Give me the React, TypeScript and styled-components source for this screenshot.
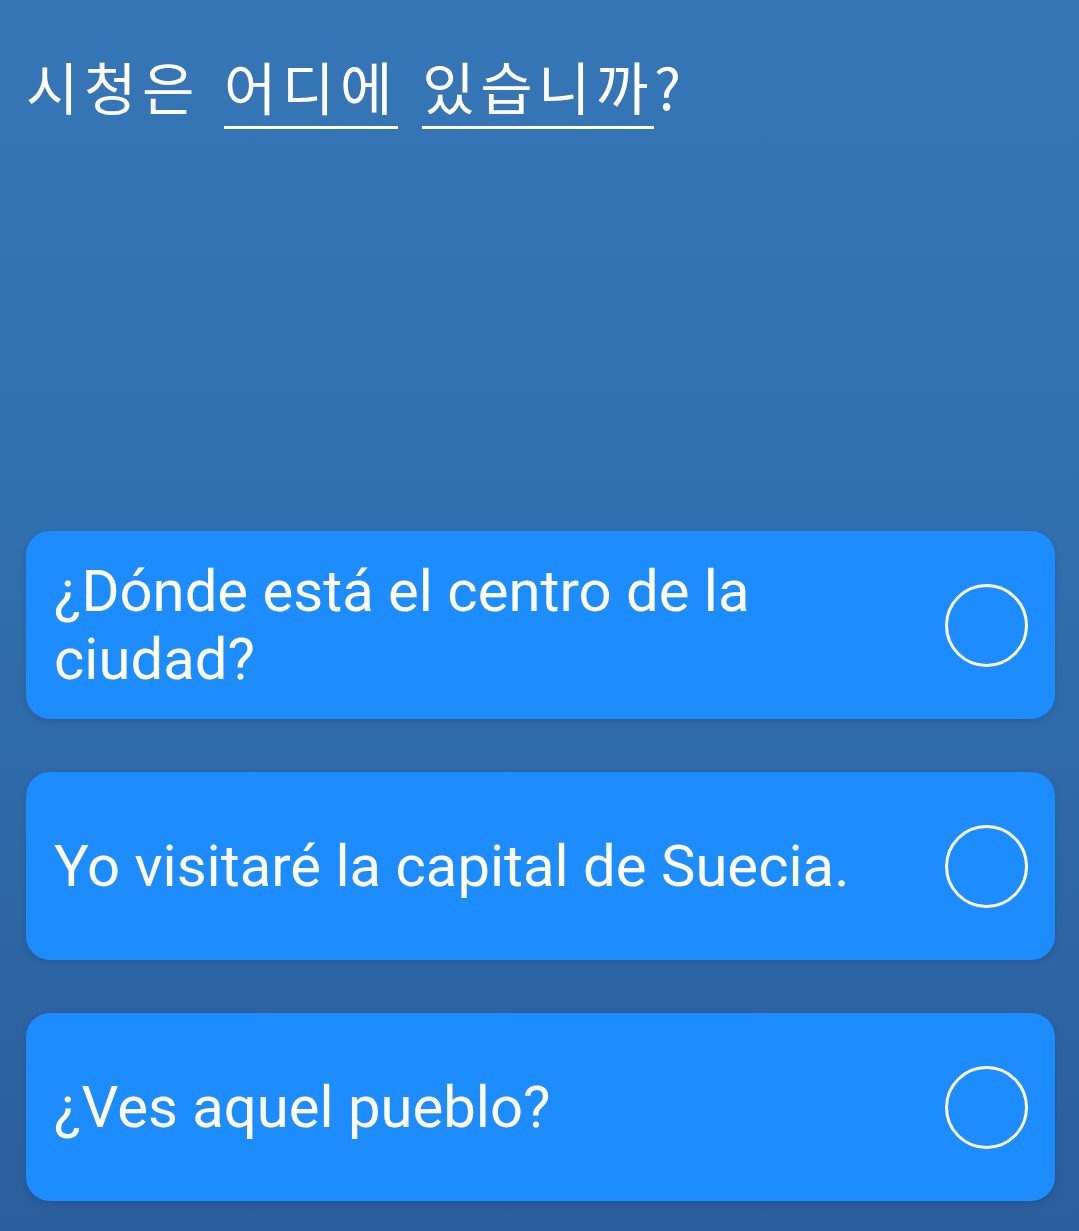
import React from "react";
import styled, { createGlobalStyle } from "styled-components";

const Global = createGlobalStyle`
  html, body { margin: 0; padding: 0; }
  body {
    background: #2c60a0;
    font-family: Roboto, "Noto Sans CJK KR", sans-serif;
  }
`;

const Page = styled.div`
  width: 1079px;
  height: 1231px;
  box-sizing: border-box;
  padding: 0 24px 30px 26px;
  display: flex;
  flex-direction: column;
  background: linear-gradient(180deg, #3676b7 0%, #3170b0 40%, #2b5e9d 100%);
`;

const Title = styled.h1`
  margin: 57px 0 0 0;
  font-family: "Noto Sans CJK KR", sans-serif;
  font-weight: 400;
  font-size: 57px;
  letter-spacing: 5.5px;
  word-spacing: 6px;
  line-height: 1;
  color: #ffffff;
  white-space: nowrap;
`;

const Blank = styled.span`
  display: inline-block;
  padding-bottom: 12px;
  border-bottom: 3px solid #ffffff;
`;

const Options = styled.div`
  margin-top: auto;
  display: flex;
  flex-direction: column;
  gap: 53px;
`;

const Card = styled.div`
  height: 188px;
  box-sizing: border-box;
  padding: 0 27px 0 28px;
  border-radius: 24px;
  background: #1d8cfe;
  box-shadow: 0 2px 6px rgba(20, 50, 90, 0.25);
  display: flex;
  align-items: center;
  gap: 30px;
`;

const Label = styled.div`
  flex: 1;
  font-family: Roboto, sans-serif;
  font-size: 58px;
  line-height: 68px;
  color: #ffffff;
`;

const Radio = styled.div`
  flex: none;
  box-sizing: border-box;
  width: 83px;
  height: 83px;
  border-radius: 50%;
  border: 3px solid #ffffff;
`;

const options = [
  "¿Dónde está el centro de la ciudad?",
  "Yo visitaré la capital de Suecia.",
  "¿Ves aquel pueblo?",
];

export default function App() {
  return (
    <>
      <Global />
      <Page>
        <Title>
          시청은 <Blank>어디에</Blank> <Blank>있습니까</Blank>?
        </Title>
        <Options>
          {options.map((o) => (
            <Card key={o}>
              <Label>{o}</Label>
              <Radio />
            </Card>
          ))}
        </Options>
      </Page>
    </>
  );
}
